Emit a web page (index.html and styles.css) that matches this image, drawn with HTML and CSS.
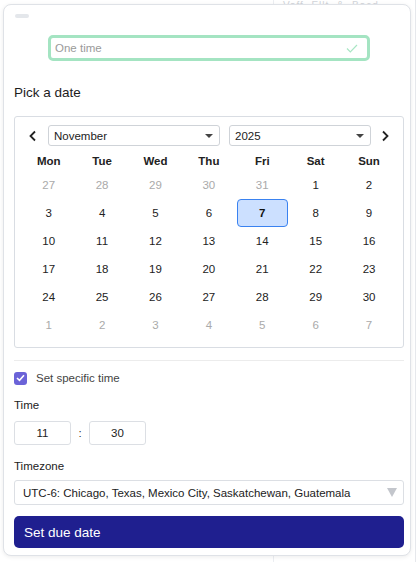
FILE: index.html
```html
<!DOCTYPE html>
<html>
<head>
<meta charset="utf-8">
<link rel="stylesheet" href="styles.css">
</head>
<body>
<div class="backdrop">
  <span class="bg-line"></span>
  <span class="bg-text">Vaff&nbsp;&nbsp;Ellt&nbsp;&nbsp;&amp;&nbsp;&nbsp;Bacd</span>
  <span class="bg-edge"></span>
</div>
<div class="panel">
  <div class="handle"></div>
  <div class="kind">
    <span class="kind-text">One time</span>
    <svg class="kind-check" width="12" height="9" viewBox="0 0 12 9"><path d="M1 4.5 L4.3 7.8 L11 1" fill="none" stroke="#a8e6c4" stroke-width="1.2"/></svg>
  </div>
  <div class="title">Pick a date</div>
  <div class="cal">
    <div class="nav">
      <span class="arrow prev"><svg width="10" height="12" viewBox="0 0 10 12"><path d="M7 1.5 L2.5 6 L7 10.5" fill="none" stroke="#222" stroke-width="1.8"/></svg></span>
      <div class="sel month"><span>November</span><span class="caret"></span></div>
      <div class="sel year"><span>2025</span><span class="caret"></span></div>
      <span class="arrow next"><svg width="10" height="12" viewBox="0 0 10 12"><path d="M3 1.5 L7.5 6 L3 10.5" fill="none" stroke="#222" stroke-width="1.8"/></svg></span>
    </div>
    <div class="grid">
      <div class="wd">Mon</div><div class="wd">Tue</div><div class="wd">Wed</div><div class="wd">Thu</div><div class="wd">Fri</div><div class="wd">Sat</div><div class="wd">Sun</div>
      <div class="d o">27</div><div class="d o">28</div><div class="d o">29</div><div class="d o">30</div><div class="d o">31</div><div class="d">1</div><div class="d">2</div>
      <div class="d">3</div><div class="d">4</div><div class="d">5</div><div class="d">6</div><div class="d sel-day">7</div><div class="d">8</div><div class="d">9</div>
      <div class="d">10</div><div class="d">11</div><div class="d">12</div><div class="d">13</div><div class="d">14</div><div class="d">15</div><div class="d">16</div>
      <div class="d">17</div><div class="d">18</div><div class="d">19</div><div class="d">20</div><div class="d">21</div><div class="d">22</div><div class="d">23</div>
      <div class="d">24</div><div class="d">25</div><div class="d">26</div><div class="d">27</div><div class="d">28</div><div class="d">29</div><div class="d">30</div>
      <div class="d o">1</div><div class="d o">2</div><div class="d o">3</div><div class="d o">4</div><div class="d o">5</div><div class="d o">6</div><div class="d o">7</div>
    </div>
  </div>
  <div class="divider"></div>
  <label class="check-row">
    <span class="checkbox"><svg width="9" height="8" viewBox="0 0 9 8"><path d="M1 4 L3.5 6.4 L8 1.3" fill="none" stroke="#fff" stroke-width="1.6"/></svg></span>
    <span class="check-label">Set specific time</span>
  </label>
  <div class="label time-label">Time</div>
  <div class="time-row">
    <div class="tbox">11</div>
    <span class="colon">:</span>
    <div class="tbox">30</div>
  </div>
  <div class="label tz-label">Timezone</div>
  <div class="tz">
    <span>UTC-6: Chicago, Texas, Mexico City, Saskatchewan, Guatemala</span>
    <span class="tz-caret"></span>
  </div>
  <div class="btn">Set due date</div>
</div>
</body>
</html>
```
FILE: styles.css
```css
* { box-sizing: border-box; }
html, body { margin: 0; padding: 0; background: #fff; }
body {
  font-family: "Liberation Sans", Arial, sans-serif;
  color: #222;
  width: 417px;
  height: 562px;
  overflow: hidden;
  position: relative;
  padding-top: 4px;
  padding-left: 3px;
}
.backdrop { position: absolute; inset: 0; z-index: 0; }
.bg-line { position: absolute; left: 273px; top: 0; width: 1px; height: 562px; background: #eceef2; }
.bg-edge { position: absolute; left: 415px; top: 0; width: 1px; height: 562px; background: #e6e8ec; }
.bg-text { position: absolute; left: 283px; top: 0; font-size: 10px; line-height: 11px; color: #d2d5da; letter-spacing: 1px; }

.panel {
  position: relative;
  z-index: 1;
  width: 408px;
  height: 552px;
  background: #fff;
  border: 1px solid #dfe2e7;
  border-radius: 8px;
  box-shadow: 0 1px 4px rgba(0,0,0,0.08);
  padding: 9px 6px 0 10px;
}
.handle { width: 14px; height: 4px; border-radius: 2px; background: #e4e7eb; margin-left: 1px; }

.kind {
  width: 322px;
  height: 26px;
  margin: 17px auto 0 auto;
  border: 3px solid #a4e4c2;
  border-radius: 5px;
  display: flex;
  align-items: center;
  justify-content: space-between;
  padding: 0 9px 0 4px;
}
.kind-text { font-size: 11.5px; color: #9a9a9a; }
.kind-check { margin-top: 1px; }

.title { font-size: 13.5px; color: #1c1c1c; margin-top: 24px; line-height: 16px; }

.cal {
  margin-top: 15px;
  height: 232px;
  border: 1px solid #d9dde3;
  border-radius: 3px;
  padding: 8px 7px 0 7px;
}
.nav { display: flex; align-items: center; height: 21px; }
.arrow { width: 26px; display: flex; align-items: center; justify-content: center; }
.arrow.prev { justify-content: flex-start; padding-left: 6px; }
.arrow.next { flex: 1; padding-left: 3px; }
.sel {
  height: 21px;
  border: 1px solid #cfd3d8;
  border-radius: 3px;
  display: flex;
  align-items: center;
  justify-content: space-between;
  padding: 0 6px 0 5px;
  font-size: 11.5px;
  color: #222;
}
.month { width: 172px; }
.year { width: 142px; margin-left: 9px; }
.caret {
  width: 0; height: 0;
  border-left: 4px solid transparent;
  border-right: 4px solid transparent;
  border-top: 4px solid #444;
}
.grid {
  display: grid;
  grid-template-columns: repeat(7, 53.4px);
  grid-auto-rows: 28px;
  grid-template-rows: 24px;
  margin-top: 1px;
}
.wd { font-size: 11.5px; font-weight: 700; display: flex; align-items: center; justify-content: center; color: #222; padding-top: 3px; }
.d { font-size: 11.5px; display: flex; align-items: center; justify-content: center; color: #222; }
.d.o { color: #aaa; }
.sel-day {
  margin: 0 1px 0 1px;
  background: #cce0ff;
  border: 1px solid #3a82f0;
  border-radius: 4px;
  font-weight: 700;
  color: #111;
}

.divider { height: 1px; background: #ececec; margin-top: 12px; }

.check-row { display: flex; align-items: center; margin-top: 10px; height: 14px; }
.checkbox {
  width: 13px; height: 13px;
  border-radius: 3px;
  background: #6b63d8;
  display: flex; align-items: center; justify-content: center;
}
.check-label { font-size: 11.5px; color: #444; margin-left: 9px; }

.label { font-size: 11.5px; color: #222; line-height: 14px; }
.time-label { margin-top: 13px; }
.time-row { display: flex; align-items: center; margin-top: 9px; }
.tbox {
  width: 57px; height: 24px;
  border: 1px solid #dcdfe4;
  border-radius: 3px;
  font-size: 11.5px;
  display: flex; align-items: center; justify-content: center;
  color: #222;
}
.colon { width: 18px; text-align: center; font-size: 11.5px; color: #333; }
.tz-label { margin-top: 14px; }
.tz {
  margin-top: 7px;
  height: 25px;
  border: 1px solid #dcdfe4;
  border-radius: 3px;
  display: flex; align-items: center; justify-content: space-between;
  padding: 0 6px 0 8px;
  font-size: 11.5px;
  color: #222;
}
.tz-caret {
  width: 0; height: 0;
  border-left: 5px solid transparent;
  border-right: 5px solid transparent;
  border-top: 9px solid #c3c6cc;
}
.btn {
  margin-top: 11px;
  height: 32px;
  background: #1f1f8f;
  border-radius: 5px;
  color: #fff;
  font-size: 13.5px;
  display: flex; align-items: center;
  padding-left: 10px;
}
```
